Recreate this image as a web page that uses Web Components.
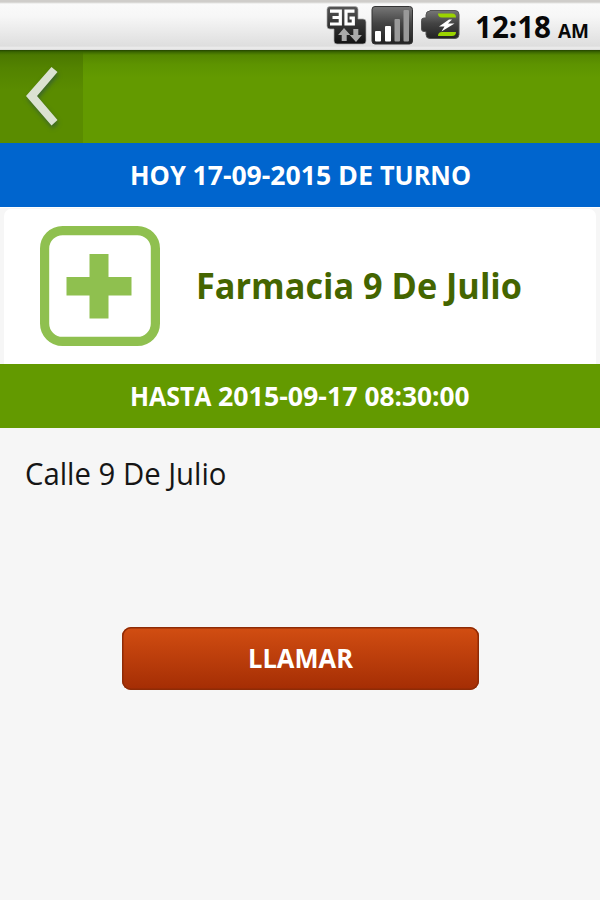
<!DOCTYPE html>
<html lang="es"><head><meta charset="utf-8"><title>Farmacia de turno</title>
<style>html,body{margin:0;background:#f6f6f6}</style></head><body>
<pharmacy-screen></pharmacy-screen>
<script>
const define=(name,html)=>customElements.define(name,class extends HTMLElement{
  connectedCallback(){
    if(this.shadowRoot)return;
    const t=document.createElement('template');t.innerHTML=html;
    this.attachShadow({mode:'open'}).append(t.content.cloneNode(true));
  }
});
/* A single line of text set to an exact width: attributes size, width, weight.
   "words" optionally lists the advance of each word, its trailing space included. */
customElements.define('fit-line',class extends HTMLElement{
  connectedCallback(){
    if(this.shadowRoot)return;
    const s=+this.getAttribute('size'),w=+this.getAttribute('width'),b=this.getAttribute('weight')||700;
    const h=Math.round(s*1.3),words=this.getAttribute('words');
    this.attachShadow({mode:'open'}).innerHTML=`<style>:host{display:block;flex:none;width:${w}px;height:${h}px}svg{display:block;overflow:visible}
    text{font:${b} ${s}px "Open Sans","Noto Sans",sans-serif;fill:currentColor}</style>
    <svg width="${w}" height="${h}"><text x="0" y="${s}"></text></svg>`;
    const text=this.shadowRoot.querySelector('text'),str=this.getAttribute('text');
    const fit=(el,len,t)=>{el.setAttribute('textLength',len);el.setAttribute('lengthAdjust','spacingAndGlyphs');el.textContent=t};
    if(!words){fit(text,w,str);return}
    const parts=str.match(/\S+\s*/g);let x=0;
    words.split(' ').forEach((n,i)=>{
      const span=document.createElementNS('http://www.w3.org/2000/svg','tspan');
      span.setAttribute('x',x);x+=+n;
      fit(span,n,parts[i]);text.append(span);
    });
  }
});
define('status-bar',`<style>
:host{display:flex;box-sizing:border-box;height:50px;background:linear-gradient(#cfcdca 0,#cfcdca 2px,#fafafa 4px,#f7f7f7 16px,#dedede 46px,#eee 48px,#d8d8d8 50px);color:#080808;padding-left:326px}
svg{flex:none;display:block}
.time{margin:7px 0 0 11px}.ap{margin:18px 0 0 7px}
</style>
<svg width="138" height="50" viewBox="326 0 138 50">
<defs><linearGradient id="d" x2="0" y2="1"><stop stop-color="#555"/><stop offset="1" stop-color="#111"/></linearGradient>
<linearGradient id="e" x2="0" y2="1"><stop stop-color="#777"/><stop offset=".45" stop-color="#444"/><stop offset="1" stop-color="#222"/></linearGradient></defs>
<path d="M330 6.500h25q3 0 3 3v9.500h5q3 0 3 3v19q0 3-3 3h-26q-3 0-3-3v-12h-4q-3 0-3-3V9.500q0-3 3-3z" fill="url(#d)" stroke="#aaa" stroke-width=".7"/>
<path d="M330 11.200H340.300V24H330M332.500 17.500H340M354.500 11.200H346V24H353.300V18H349.500" fill="none" stroke="#fff" stroke-width="3.200"/>
<path d="M344 28l6.300 7h-3.600v6h-5v-6h-3.600zM356 42l-6.300-7h3.600v-6h5v6h3.600z" fill="#aaa"/>
<rect x="372" y="6.500" width="40.500" height="37.500" rx="3" fill="url(#e)" stroke="#333"/>
<g fill="#fff"><rect x="375" y="31" width="6" height="10.500" rx="1"/><rect x="385" y="26" width="6" height="15.500" rx="1"/></g>
<g fill="#999"><rect x="394.500" y="19" width="5.500" height="22.500" rx="1"/><rect x="403.500" y="10" width="5.500" height="31.500" rx="1"/></g>
<path d="M430 10.500h25q4 0 4 4v20q0 4-4 4h-25q-4 0-4-4v-3h-2q-2.500 0-2.500-2.500v-8.500q0-2.500 2.500-2.500h2v-3q0-4 4-4z" fill="url(#e)" stroke="#555"/>
<path d="M438 13.500h14q4 0 4 4h-14q-4 0-4-4zM438 36h14q4 0 4-4h-14q-4 0-4 4z" fill="#9bd400"/>
<path d="M449 19.500l-10 7h5.500l-3 5 13-8h-6.500l4-4z" fill="#fff"/>
</svg>
<fit-line class="time" size="30.5" width="76" text="12:18"></fit-line>
<fit-line class="ap" size="20" width="31" text="AM"></fit-line>`);
define('nav-bar',`<style>
:host{display:block;height:93px;background:linear-gradient(#244500 0,#3b6800 2px,#548600 5px,#5d9300 14px,#639a00 28px)}
.back{width:83px;height:93px;background:linear-gradient(#244500 0,#3b6800 2px,#4b7800 5px,#538300 18px,#5a8c00 40px,#5a8c00)}
svg{display:block}path{filter:drop-shadow(1px 3px 2px #2458)}
</style><div class="back"><svg width="83" height="93" viewBox="0 50 83 93"><path d="M26 96L51.500 67 57.500 72 37 96 57.500 120 51.500 125.500z" fill="#dbe2d2"/></svg></div>`);
define('date-banner',`<style>:host{display:flex;justify-content:center;align-items:center;box-sizing:border-box;height:64px;color:#fff;background:#639a00;padding-top:2px}:host([blue]){background:#0065ce}</style><slot></slot>`);
define('pharmacy-card',`<style>
:host{display:flex;height:157px;box-sizing:border-box;background:#f6f6f6;padding:1px 4px 0;border-top:1px solid #fff}
.card{display:flex;flex:1;background:#fff;border-radius:7px 7px 0 0}svg{flex:none;margin:16.500px 0 0 36px}slot{display:block;margin:52.500px 0 0 35.500px}
</style><div class="card"><svg width="120" height="120"><rect x="4.600" y="4.600" width="110.800" height="110.800" rx="18" fill="none" stroke="#8fc04f" stroke-width="9.200"/><path d="M49.500 28h19v23h23v18.500h-23v23h-19v-23h-23V51h23z" fill="#8fc04f"/></svg><slot></slot></div>`);
define('call-button',`<style>
:host{display:block}button{display:flex;justify-content:center;align-items:flex-start;box-sizing:border-box;width:357px;height:63px;margin:0 auto;padding:15px 0 0;border:0;border-radius:9px;color:#fff;background:linear-gradient(#d24e12,#a42d04);box-shadow:inset 0 0 0 1.500px #8e2b06}
</style><button><slot></slot></button>`);
define('pharmacy-screen',`<style>
:host{display:block;width:600px;height:900px;background:#f6f6f6;overflow:hidden}
.title{color:#446500}.address{color:#151515;margin:26px 0 0 24.500px}call-button{margin-top:133px}
</style>
<status-bar></status-bar><nav-bar></nav-bar>
<date-banner blue><fit-line size="26" width="341" words="62.5 145.5 42 91" text="HOY 17-09-2015 DE TURNO"></fit-line></date-banner>
<pharmacy-card><fit-line class="title" size="36.5" width="326" text="Farmacia 9 De Julio"></fit-line></pharmacy-card>
<date-banner><fit-line size="26" width="341" words="88 146.500 105" text="HASTA 2015-09-17 08:30:00"></fit-line></date-banner>
<fit-line class="address" size="31" width="201.500" text="Calle 9 De Julio" weight="400"></fit-line>
<call-button><fit-line size="26" width="105" text="LLAMAR"></fit-line></call-button>`);
</script></body></html>
